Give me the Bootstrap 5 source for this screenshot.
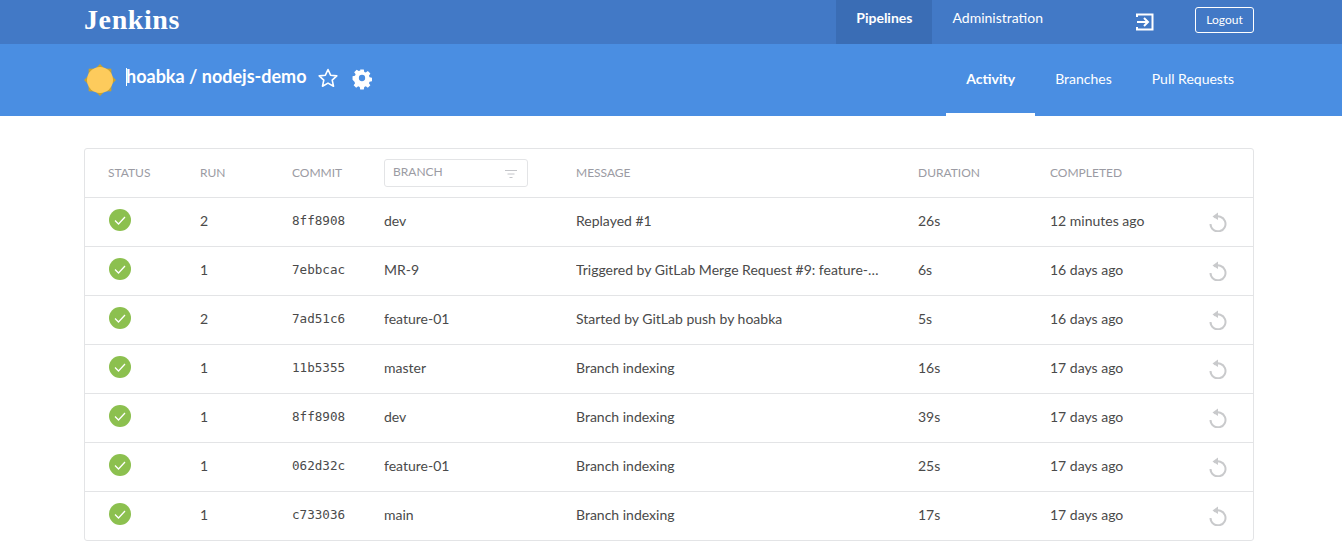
<!DOCTYPE html>
<html lang="en">
<head>
  <meta charset="UTF-8">
  <title>hoabka / nodejs-demo - Activity</title>
  <meta name="viewport" content="width=device-width, initial-scale=1">
  <link href="https://cdn.jsdelivr.net/npm/bootstrap@5.3.0/dist/css/bootstrap.min.css" rel="stylesheet">
  <style>
    body {
      font-family: Lato, "Liberation Sans", sans-serif;
      font-size: 14px;
      color: #4a4a4a;
      background: #fff;
      overflow: hidden;
    }
    .page-wrap {
      width: 1170px;
      margin-left: 84px;
    }
    .top-bar {
      background: #4279c6;
      height: 44px;
    }
    .top-bar .page-wrap, .sub-bar .page-wrap {
      height: 100%;
    }
    .brand-name {
      font-family: "Liberation Serif", serif;
      font-weight: 700;
      font-size: 28px;
      letter-spacing: .6px;
      line-height: 40px;
      color: #fff;
      text-decoration: none;
    }
    .top-link {
      display: block;
      height: 44px;
      line-height: 36px;
      padding: 0 20px;
      color: #fff;
      text-decoration: none;
    }
    .top-link.active {
      background: #3a6db5;
      font-weight: 700;
    }
    .logout-btn {
      width: 59px;
      height: 26px;
      padding: 0;
      margin-top: 7px;
      font-size: 12px;
      line-height: 24px;
      color: #fff;
      border: 1px solid #fff;
      border-radius: 3px;
      background: transparent;
    }
    .exit-icon {
      margin: 12px 40px 0 72px;
      display: block;
    }
    .sub-bar {
      background: #4a8ee2;
      height: 72px;
    }
    .repo-area {
      padding-bottom: 4px;
    }
    .sun-icon {
      margin-top: 4px;
    }
    .repo-name {
      position: relative;
      font-size: 18px;
      font-weight: 700;
      color: #fff;
      margin: 0 0 4px 10px;
      line-height: 24px;
    }
    /* mouse cursor caught in the screenshot */
    .repo-name::before {
      content: "";
      position: absolute;
      left: 0;
      top: 4px;
      width: 1px;
      height: 18px;
      background: #fff;
    }
    .star-icon {
      margin-left: 9px;
    }
    .gear-icon {
      margin: 0 0 1px 10px;
    }
    .tab-link {
      display: block;
      height: 72px;
      line-height: 70px;
      padding: 0 20px;
      color: #fff;
      text-decoration: none;
    }
    .tab-link.active {
      font-weight: 700;
      border-bottom: 3px solid #fff;
    }
    .runs-box {
      margin-top: 32px;
      border: 1px solid #e3e4e6;
      border-radius: 3px;
      overflow: hidden;
    }
    .runs-table {
      table-layout: fixed;
      width: 100%;
      margin: 0;
      color: #4a4a4a;
    }
    .runs-table th, .runs-table td {
      padding: 0 0 2px;
      height: 49px;
      vertical-align: middle;
      border-bottom: 1px solid #e3e4e6;
      white-space: nowrap;
      overflow: hidden;
    }
    .runs-table th {
      height: 48px;
      padding-bottom: 0;
      font-size: 12px;
      font-weight: 400;
      color: #9b9ba3;
      text-transform: uppercase;
    }
    .runs-table tr:last-child td {
      border-bottom: 0;
      height: 49px;
    }
    .runs-table th:first-child, .runs-table td:first-child {
      padding-left: 23px;
    }
    .col-status { width: 115px; }
    .col-run { width: 92px; }
    .col-commit { width: 92px; }
    .col-branch { width: 192px; }
    .col-message { width: 342px; }
    .col-duration { width: 132px; }
    .col-done { width: 155px; }
    .runs-table .commit-hash {
      font-family: "DejaVu Sans Mono", "Liberation Mono", monospace;
      font-size: 12.6px;
      padding-top: 1px;
    }
    .branch-filter {
      width: 144px;
      height: 28px;
      border: 1px solid #e3e4e6;
      border-radius: 3px;
      padding: 0 10px 2px 8px;
      margin-top: 1px;
    }
    .filter-icon {
      margin-top: 3px;
    }
    .status-ok {
      display: block;
      margin: -2px 0 0 1px;
    }
    .replay-icon {
      display: block;
      margin: 2px 0 0 3px;
    }
  </style>
</head>
<body>

<!-- top navigation -->
<div class="top-bar">
  <div class="page-wrap d-flex justify-content-between">
    <a class="brand-name" href="#">Jenkins</a>
    <div class="d-flex">
      <a class="top-link active" href="#">Pipelines</a>
      <a class="top-link" href="#">Administration</a>
      <svg class="exit-icon" width="20" height="20" viewBox="0 0 20 20" fill="none" stroke="#fff" stroke-width="2">
        <path d="M2 5V2.500H17.500V17.500H2V15"/>
        <path d="M2 10H13M9 6l4 4-4 4"/>
      </svg>
      <button type="button" class="btn logout-btn">Logout</button>
    </div>
  </div>
</div>

<div class="sub-bar">
  <div class="page-wrap d-flex justify-content-between">
    <div class="d-flex align-items-center repo-area">
      <svg class="sun-icon" width="32" height="32" viewBox="0 0 32 32">
        <polygon fill="#c9a22e" points="16,0 20.500,4.500 27.300,4.700 27.500,11.500 32,16 27.500,20.500 27.300,27.300 20.500,27.500 16,32 11.500,27.500 4.700,27.300 4.500,20.500 0,16 4.500,11.500 4.700,4.700 11.500,4.500"/>
        <circle cx="16" cy="16" r="13" fill="#fdcb5c"/>
      </svg>
      <div class="repo-name">hoabka / nodejs-demo</div>
      <svg class="star-icon" width="24" height="24" viewBox="0 0 24 24" fill="none" stroke="#fff" stroke-width="1.600" stroke-linejoin="round">
        <path d="M12 3.500l2.600 5.700 6.200.7-4.600 4.200 1.300 6.100L12 17.100l-5.500 3.100 1.300-6.100-4.600-4.200 6.200-.7z"/>
      </svg>
      <svg class="gear-icon" width="24" height="24" viewBox="0 0 24 24" fill="#fff">
        <path fill-rule="evenodd" d="M10 2.500h4l.5 2.700 1.700.7 2.300-1.600 2.800 2.800-1.600 2.300.7 1.700 2.700.5v4l-2.700.5-.7 1.700 1.600 2.300-2.800 2.800-2.300-1.600-1.700.7-.5 2.700h-4l-.5-2.700-1.700-.7-2.300 1.600-2.800-2.800 1.600-2.300-.7-1.700L1.500 14v-4l2.700-.5.7-1.700-1.600-2.300 2.800-2.800 2.300 1.600 1.700-.7zM12 8.500a3.500 3.500 0 1 0 0 7 3.500 3.500 0 0 0 0-7z" transform="translate(1.200 1.200) scale(.9)"/>
      </svg>
    </div>
    <div class="d-flex">
      <a class="tab-link active" href="#">Activity</a>
      <a class="tab-link" href="#">Branches</a>
      <a class="tab-link" href="#">Pull Requests</a>
    </div>
  </div>
</div>

<!-- activity list -->
<div class="page-wrap">
  <div class="runs-box">
    <table class="table runs-table">
      <colgroup>
        <col class="col-status"><col class="col-run"><col class="col-commit"><col class="col-branch">
        <col class="col-message"><col class="col-duration"><col class="col-done"><col>
      </colgroup>
      <thead>
        <tr>
          <th>Status</th>
          <th>Run</th>
          <th>Commit</th>
          <th>
            <div class="branch-filter d-flex align-items-center justify-content-between">
              <span>Branch</span>
              <svg class="filter-icon" width="12" height="10" viewBox="0 0 12 10" fill="none" stroke="#c4c5c9" stroke-width="1"><path d="M0 1.500H12M2.500 5H9.500M4.500 8.500H7.500"/></svg>
            </div>
          </th>
          <th>Message</th>
          <th>Duration</th>
          <th>Completed</th>
          <th></th>
        </tr>
      </thead>
      <tbody id="runRows"></tbody>
    </table>
  </div>
</div>

<script src="https://cdn.jsdelivr.net/npm/bootstrap@5.3.0/dist/js/bootstrap.bundle.min.js"></script>
<script>
  const runs = [
    ['2', '8ff8908', 'dev', 'Replayed #1', '26s', '12 minutes ago'],
    ['1', '7ebbcac', 'MR-9', 'Triggered by GitLab Merge Request #9: feature-…', '6s', '16 days ago'],
    ['2', '7ad51c6', 'feature-01', 'Started by GitLab push by hoabka', '5s', '16 days ago'],
    ['1', '11b5355', 'master', 'Branch indexing', '16s', '17 days ago'],
    ['1', '8ff8908', 'dev', 'Branch indexing', '39s', '17 days ago'],
    ['1', '062d32c', 'feature-01', 'Branch indexing', '25s', '17 days ago'],
    ['1', 'c733036', 'main', 'Branch indexing', '17s', '17 days ago']
  ];
  const okIcon = `<svg class="status-ok" width="22" height="22" viewBox="0 0 22 22">
    <circle cx="11" cy="11" r="11" fill="#8cc04f"/>
    <path d="M6 11.500l3.500 3.500L16 8" fill="none" stroke="#fff" stroke-width="1.300"/></svg>`;
  const replayIcon = `<svg class="replay-icon" width="20" height="20" viewBox="0 0 20 20">
    <path d="M6 5.500A7.500 7.500 0 1 1 2.500 12" fill="none" stroke="#c9cacc" stroke-width="2"/>
    <path d="M10 0.500V8L4.500 4.500z" fill="#c9cacc"/></svg>`;
  document.getElementById('runRows').innerHTML = runs.map(r => `
    <tr>
      <td>${okIcon}</td>
      <td>${r[0]}</td>
      <td class="commit-hash">${r[1]}</td>
      <td>${r[2]}</td>
      <td>${r[3]}</td>
      <td>${r[4]}</td>
      <td>${r[5]}</td>
      <td>${replayIcon}</td>
    </tr>`).join('');
</script>
</body>
</html>
